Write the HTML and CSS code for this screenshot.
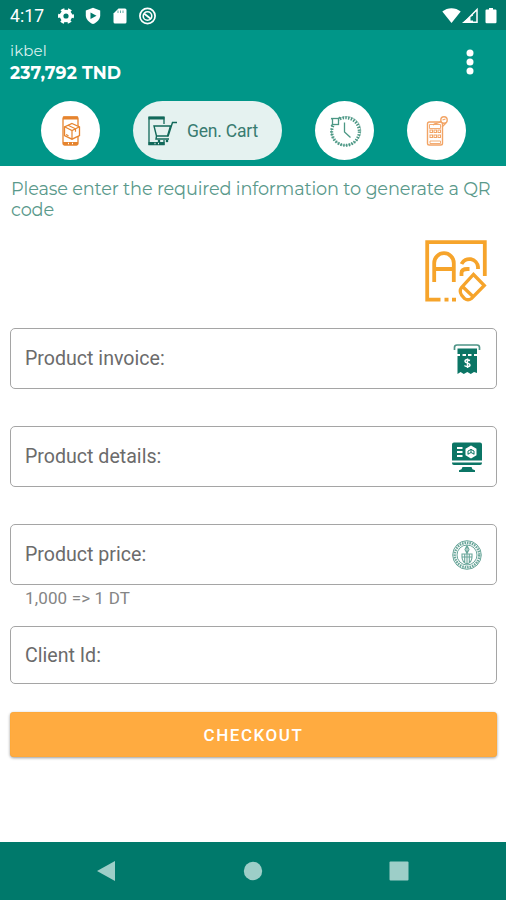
FILE: index.html
```html
<!DOCTYPE html>
<html lang="en">
<head>
<meta charset="utf-8">
<title>Gen. Cart</title>
<link rel="stylesheet" href="styles.css">
</head>
<body>
<div class="screen">
  <div class="status">
    <span class="time">4:17</span>
    <svg class="status-left" width="100" height="18" viewBox="0 0 100 18" fill="#fff">
      <circle cx="9" cy="9" r="4.4" fill="none" stroke="#fff" stroke-width="3.6"/>
      <circle cx="9" cy="9" r="6.6" fill="none" stroke="#fff" stroke-width="2.8" stroke-dasharray="3.6 3.31" stroke-dashoffset="1.8"/>
      <path d="M36 .8l7.2 2.8v4.6c0 4-3 7.2-7.2 8.8-4.200-1.600-7.200-4.800-7.200-8.800V3.600z"/>
      <path d="M33.500 5.500l6 3.300-6 3.300z" fill="#00796b"/>
      <path d="M61.500 1.500H68a1.500 1.500 0 0 1 1.500 1.500v12a1.500 1.500 0 0 1-1.500 1.500H58a1.500 1.500 0 0 1-1.500-1.500V6.500z"/>
      <path d="M61 3.500v2.500M63.500 3.500v2.500M66 3.500v2.500" stroke="#00796b" stroke-width=".6"/>
      <g fill="none" stroke="#fff"><circle cx="90.500" cy="9" r="7.600" stroke-width="1.700"/><circle cx="90.500" cy="9" r="4.300" stroke-width="1.600"/><path d="M87 6.500l7 5.500" stroke-width="1.800"/></g>
    </svg>
    <svg class="status-right" width="56" height="18" viewBox="0 0 56 18" fill="#fff">
      <path d="M.3 4.500C5.500 0 13.500 0 18.700 4.500L9.500 16z"/>
      <path d="M35 2.500V15.200H22.500z" fill="none" stroke="#fff" stroke-width="1.500"/><path d="M20 16h11V7z"/><path d="M32 8v5.500h-3.500V10z" fill="#00796b"/>
      <path d="M47 1h4v1.600h2.500a1 1 0 0 1 1 1V15a1.200 1.200 0 0 1-1.200 1.200h-8.600a1.200 1.200 0 0 1-1.200-1.200V3.600a1 1 0 0 1 1-1H47z"/>
    </svg>
  </div>

  <header class="header">
    <div class="account">
      <div>
        <div class="user">ikbel</div>
        <div class="balance">237,792 TND</div>
      </div>
      <svg class="more" width="8" height="26" viewBox="0 0 8 26" fill="#fff"><circle cx="4" cy="4" r="3.500"/><circle cx="4" cy="13" r="3.500"/><circle cx="4" cy="22" r="3.500"/></svg>
    </div>
    <nav class="tabs">
      <div class="tab">
        <svg width="20" height="32" viewBox="0 0 20 32" fill="none" stroke="#e6842e">
          <rect x="2" y="2" width="15" height="28" rx="1.500" stroke-width="1.300"/>
          <path d="M2 3h15M2 28.500h15" stroke-width="2.800"/><path d="M7 28.500h1M11 28.500h1" stroke="#fff" stroke-width="1.500"/>
          <path d="M11 8.500l7.500 3.300v8.700L11 24.200l-7.500-3.700v-8.700z" fill="#fff" stroke-width="1.300"/><path d="M3.500 11.800L11 15.500l7.500-3.700M11 15.500v8.700M7 10.200l7.500 3.600v3M5 19.500l2.500 1.200" stroke-width="1.200"/>
        </svg>
      </div>
      <div class="tab tab-active">
        <svg width="31" height="32" viewBox="0 0 31 32" fill="none" stroke="#12695a">
          <path d="M17 9V2.500H2v27h15V25" stroke-width="1.300"/><path d="M1.500 3h16M1.500 28.500h16" stroke-width="2.800"/><path d="M7.500 28.500h1M11 28.500h1" stroke="#e5f2f0" stroke-width="1.500"/>
          <path d="M7 11h16.500l-3 10H9.500zM9.500 21l-.5 3h13" fill="#e5f2f0" stroke-width="1.400"/><path d="M30 7.500h-4.500L21 21.500" stroke-width="1.400"/><circle cx="12" cy="26" r="1.300" fill="#12695a" stroke="none"/><circle cx="20" cy="26" r="1.300" fill="#12695a" stroke="none"/>
        </svg>
        <span class="tab-label">Gen. Cart</span>
      </div>
      <div class="tab">
        <svg width="34" height="34" viewBox="0 0 34 34" fill="none" stroke="#4c9784">
          <circle cx="17.500" cy="17.500" r="13.800" stroke-width="3" stroke-dasharray="1.500 1.300"/>
          <path d="M11 5a14 14 0 1 1 12 25M23 30A14 14 0 0 1 3.500 15" stroke-width=".8" opacity=".7"/>
          <rect x="4.500" y="4.500" width="6" height="6" fill="#fff" stroke-width="1.300"/><path d="M3 4.500l2 .5M10.500 4.500L12 3M4.500 10.500L3 12" stroke-width="1.300"/>
          <path d="M16.500 8.500v9.500l6 5.500" stroke-width="1.300"/>
        </svg>
      </div>
      <div class="tab">
        <svg width="24" height="32" viewBox="0 0 24 32" fill="none" stroke="#f2a465">
          <rect x="2.500" y="7" width="15" height="23" rx="1.800" stroke-width="1.400"/><path d="M4.500 9.500h11v4h-11zM5 26h10.500v2.500H5z" stroke-width=".9"/>
          <g stroke-width="1"><rect x="5" y="15" width="2.500" height="2.500"/><rect x="9" y="15" width="2.500" height="2.500"/><rect x="13" y="15" width="2.500" height="2.500"/><rect x="5" y="20" width="2.500" height="2.500"/><rect x="9" y="20" width="2.500" height="2.500"/><rect x="13" y="20" width="2.500" height="2.500"/></g>
          <circle cx="19" cy="5" r="3.200" fill="#fff" stroke-width="1.400"/><path d="M8 10c3-3 5 0 8-4M17 12l4-4M17.500 5l3-1" stroke-width="1.200"/>
        </svg>
      </div>
    </nav>
  </header>

  <main class="content">
    <p class="intro">Please enter the required information to generate a QR<br>code</p>
    <svg class="clear" width="62" height="62" viewBox="0 0 62 62" fill="none" stroke="#f6a42b" stroke-width="3.800">
      <path d="M15.500 59.600H2.200V2.200H59.800V36"/>
      <path d="M9.200 42V23a9.800 9.800 0 0 1 19.600 0v19M9.200 29h19.600"/>
      <path d="M36.500 24a8.700 8.700 0 0 1 16.500 3v2M36.500 36v-3q0-4 6-4h2"/>
      <path d="M48.500 34.500L59.300 45.500 46.500 58.500q-3.500 2.500-7 0l-3-3.500q-2.500-4 0-7.500zM37.500 46.500L49 57.500" stroke-width="3.300"/>
      <path d="M19.500 59.600h4M27 59.600h4"/>
    </svg>

    <div class="fields">
      <div class="field">
        <label>Product invoice:</label>
        <svg width="30" height="34" viewBox="0 0 30 34" fill="#0b7565">
          <path d="M2.500 8V5.500Q2.500 3 5 3h20q2.500 0 2.500 2.500V8" fill="none" stroke="#4e9487" stroke-width="1.700"/>
          <path d="M5.500 6.500h19.500V12H5.500zM5.500 14H8v-2h2.500v2H14v-2h2v2h3.500v-2H22v2h3v17l-3-1-3.200 2-3.500-2-3.500 2-3.200-2-3.100 2z"/>
          <path d="M18 18.500q-5-2-5 .8c0 2.200 5 1.400 5 3.700 0 2.500-5 1.500-5.500.5M15.500 16.500v9.500" fill="none" stroke="#fff" stroke-width="1.500"/>
        </svg>
      </div>
      <div class="field">
        <label>Product details:</label>
        <svg width="30" height="32" viewBox="0 0 30 32" fill="#0b7565">
          <path d="M2 1.500h26a2 2 0 0 1 2 2V19.500H0v-16a2 2 0 0 1 2-2zM0 21.500h30v.5a2 2 0 0 1-2 2H2a2 2 0 0 1-2-2zM10.500 26h9l1 2.200 2.500 1v1.800H7v-1.800l2.500-1z"/>
          <path d="M5 7h5.500M5 11h5.500M5 15h5.500" stroke="#fff" stroke-width="1.900"/>
          <path d="M19 4.500l5.500 3.200v6.500L19 17.400l-5.500-3.200V7.700z" fill="#fff"/><path d="M16 13.500V10l3-1.500 3 1.500v3.500M19 8v3.500L16 13M19 11.500l3 1.500" stroke="#0b7565" stroke-width="1" fill="none"/>
        </svg>
      </div>
      <div class="field">
        <label>Product price:</label>
        <svg width="30" height="30" viewBox="0 0 30 30" fill="none" stroke="#6ba79b">
          <circle cx="15" cy="15" r="14.300" stroke-width="1"/><circle cx="15" cy="15" r="12.300" stroke-width="2.500" stroke-dasharray="1.600 .9"/><circle cx="15" cy="15" r="10" stroke-width="1"/>
          <path d="M15 5.500l-2 4 2 4 2-4zM15 6v18M10 14h10v3q0 5-5 7-5-2-5-7zM10.500 17h9M12.700 14v8M17.300 14v8" stroke-width="1.100"/>
        </svg>
      </div>
    </div>
    <div class="hint">1,000 =&gt; 1 DT</div>
    <div class="field field-client"><label>Client Id:</label></div>
    <button class="checkout">CHECKOUT</button>
  </main>

  <footer class="navbar">
    <svg width="20" height="20" viewBox="0 0 20 20"><path d="M1 10L19 0V20z"/></svg>
    <svg width="20" height="20" viewBox="0 0 20 20"><circle cx="10" cy="10" r="9.200"/></svg>
    <svg width="20" height="20" viewBox="0 0 20 20"><rect x=".5" y=".5" width="19" height="19" rx="1"/></svg>
  </footer>
</div>
</body>
</html>
```
FILE: styles.css
```css
* { box-sizing: border-box; }
body { margin: 0; background: #fff; font-family: Roboto, sans-serif; }
svg { display: block; flex: none; }
.screen { width: 506px; height: 900px; display: flex; flex-direction: column; overflow: hidden; }
.status { height: 30px; padding: 1px 8px 0 10px; background: #00796b; display: flex; align-items: center; color: #fff; }
.time { width: 47px; font-size: 17.5px; letter-spacing: .1px; line-height: 30px; }
.status-right { margin-left: auto; }
.header { height: 136px; background: #009688; color: #fff; }
.account { height: 71px; padding: 11px 32px 0 10px; display: flex; justify-content: space-between; font-family: Montserrat, Inter, sans-serif; }
.user { font-size: 15px; line-height: 19px; letter-spacing: .1px; color: #d9f0ed; }
.balance { font-size: 17.3px; line-height: 22px; font-weight: 700; letter-spacing: .1px; margin-top: 2px; white-space: nowrap; }
.more { margin-top: 8px; }
.tabs { padding: 0 40px 0 41px; display: flex; justify-content: space-between; }
.tab { width: 59px; height: 59px; border-radius: 30px; background: #fff; display: flex; align-items: center; justify-content: center; }
.tab-active { width: 149px; background: #e5f2f0; justify-content: flex-start; padding-left: 14px; gap: 9px; }
.tab-label { font-size: 17.5px; color: #397c70; white-space: nowrap; letter-spacing: -.2px; padding-top: 1px; }
.content { flex: 1; padding: 12px 9px 0 10px; display: flex; flex-direction: column; }
.intro { margin: 0; height: 43px; padding-left: 1px; font-family: Montserrat, Inter, sans-serif; font-size: 17.7px; line-height: 21px; letter-spacing: -.16px; font-weight: 400; color: #5a998b; white-space: nowrap; }
.clear { align-self: flex-end; margin: 19px 10px 26px 0; }
.fields { display: flex; flex-direction: column; gap: 37px; }
.field { height: 61px; border: 1.5px solid #a5a5a5; border-radius: 5px; padding: 0 14px; display: flex; align-items: center; justify-content: space-between; color: #6b6b6b; font-size: 19.6px; }
.hint { height: 41px; padding: 3px 15px 0; font-size: 17px; line-height: 21px; color: #858585; letter-spacing: .15px; }
.field-client { height: 58px; }
.checkout { height: 45px; margin-top: 28px; padding: 0; border: 0; border-radius: 4px; background: #ffab40; box-shadow: 0 1px 3px rgba(0,0,0,.4), inset 0 0 1px #f59a13; color: #fff; font: 500 17px Roboto, sans-serif; letter-spacing: 1.55px; }
.navbar { height: 58px; background: #00796b; display: flex; justify-content: space-between; align-items: center; padding: 0 97px 0 96px; }
.navbar svg { fill: #9dcec8; }
```
